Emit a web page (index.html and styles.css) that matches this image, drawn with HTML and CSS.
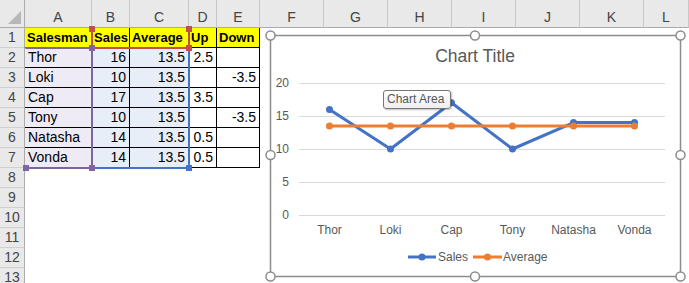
FILE: index.html
```html
<!DOCTYPE html>
<html lang="en">
<head>
  <meta charset="UTF-8">
  <title>Sales vs Average</title>
  <link rel="stylesheet" href="styles.css">
</head>
<body>
<div class="sheet">

  <div class="row head">
    <div class="corner"><span class="tri"></span></div>
    <div class="colh">A</div><div class="colh">B</div><div class="colh">C</div>
    <div class="colh">D</div><div class="colh">E</div><div class="colh">F</div>
    <div class="colh">G</div><div class="colh">H</div><div class="colh">I</div>
    <div class="colh">J</div><div class="colh">K</div><div class="colh">L</div>
  </div>

  <div class="row">
    <div class="rowh">1</div>
    <div class="c hd">Salesman</div><div class="c hd">Sales</div><div class="c hd">Average</div>
    <div class="c hd">Up</div><div class="c hd">Down</div>
    <div class="rest"></div>
  </div>
  <div class="row">
    <div class="rowh">2</div>
    <div class="c cat">Thor</div><div class="c val num">16</div><div class="c val num">13.5</div>
    <div class="c num">2.5</div><div class="c num"></div>
    <div class="rest"></div>
  </div>
  <div class="row">
    <div class="rowh">3</div>
    <div class="c cat">Loki</div><div class="c val num">10</div><div class="c val num">13.5</div>
    <div class="c num"></div><div class="c num">-3.5</div>
    <div class="rest"></div>
  </div>
  <div class="row">
    <div class="rowh">4</div>
    <div class="c cat">Cap</div><div class="c val num">17</div><div class="c val num">13.5</div>
    <div class="c num">3.5</div><div class="c num"></div>
    <div class="rest"></div>
  </div>
  <div class="row">
    <div class="rowh">5</div>
    <div class="c cat">Tony</div><div class="c val num">10</div><div class="c val num">13.5</div>
    <div class="c num"></div><div class="c num">-3.5</div>
    <div class="rest"></div>
  </div>
  <div class="row">
    <div class="rowh">6</div>
    <div class="c cat">Natasha</div><div class="c val num">14</div><div class="c val num">13.5</div>
    <div class="c num">0.5</div><div class="c num"></div>
    <div class="rest"></div>
  </div>
  <div class="row">
    <div class="rowh">7</div>
    <div class="c cat">Vonda</div><div class="c val num">14</div><div class="c val num">13.5</div>
    <div class="c num">0.5</div><div class="c num"></div>
    <div class="rest"></div>
  </div>
  <div class="row"><div class="rowh">8</div><div class="blank"></div></div>
  <div class="row"><div class="rowh">9</div><div class="blank"></div></div>
  <div class="row"><div class="rowh">10</div><div class="blank"></div></div>
  <div class="row"><div class="rowh">11</div><div class="blank"></div></div>
  <div class="row"><div class="rowh">12</div><div class="blank"></div></div>
  <div class="row"><div class="rowh">13</div><div class="blank"></div></div>

  <!-- range highlights for the chart source -->
  <div class="rng rng-blue"></div>
  <div class="rng rng-red"></div>
  <div class="rng rng-purple"></div>
  <span class="hdl h-purple" style="left:89px;top:45px"></span>
  <span class="hdl h-purple" style="left:89px;top:165px"></span>
  <span class="hdl h-purple" style="left:23px;top:165px"></span>
  <span class="hdl h-red" style="left:186px;top:45px"></span>
  <span class="hdl h-red" style="left:89px;top:26px"></span>
  <span class="hdl h-red" style="left:186px;top:26px"></span>
  <span class="hdl h-blue" style="left:186px;top:165px"></span>

  <svg class="chart" width="689" height="283" viewBox="0 0 689 283">
    <rect x="270.5" y="35.5" width="410" height="241" fill="#fff" stroke="#8c8c8c" stroke-width="1.5"/>
    <text class="title" x="475" y="62" text-anchor="middle">Chart Title</text>

    <g stroke="#d9d9d9" stroke-width="1">
      <line x1="299" y1="83.5" x2="665" y2="83.5"/>
      <line x1="299" y1="116.5" x2="665" y2="116.5"/>
      <line x1="299" y1="149.5" x2="665" y2="149.5"/>
      <line x1="299" y1="182.5" x2="665" y2="182.5"/>
      <line x1="299" y1="215.5" x2="665" y2="215.5"/>
    </g>
    <g class="axis" text-anchor="end">
      <text x="289" y="87">20</text>
      <text x="289" y="120">15</text>
      <text x="289" y="153">10</text>
      <text x="289" y="186">5</text>
      <text x="289" y="219">0</text>
    </g>
    <g class="axis" text-anchor="middle">
      <text x="329.5" y="234">Thor</text>
      <text x="390.5" y="234">Loki</text>
      <text x="451.5" y="234">Cap</text>
      <text x="512.5" y="234">Tony</text>
      <text x="573.5" y="234">Natasha</text>
      <text x="634.5" y="234">Vonda</text>
    </g>

    <g fill="#4472c4">
      <polyline points="329.5,109.4 390.5,149 451.5,102.8 512.5,149 573.5,122.6 634.5,122.6" fill="none" stroke="#4472c4" stroke-width="3" stroke-linejoin="round"/>
      <circle cx="329.5" cy="109.4" r="3.5"/>
      <circle cx="390.5" cy="149" r="3.5"/>
      <circle cx="451.5" cy="102.8" r="3.5"/>
      <circle cx="512.5" cy="149" r="3.5"/>
      <circle cx="573.5" cy="122.6" r="3.5"/>
      <circle cx="634.5" cy="122.6" r="3.5"/>
    </g>
    <g fill="#ed7d31">
      <polyline points="329.5,126 390.5,126 451.5,126 512.5,126 573.5,126 634.5,126" fill="none" stroke="#ed7d31" stroke-width="3"/>
      <circle cx="329.5" cy="126" r="3.5"/>
      <circle cx="390.5" cy="126" r="3.5"/>
      <circle cx="451.5" cy="126" r="3.5"/>
      <circle cx="512.5" cy="126" r="3.5"/>
      <circle cx="573.5" cy="126" r="3.5"/>
      <circle cx="634.5" cy="126" r="3.5"/>
    </g>

    <g class="axis">
      <line x1="408" y1="257" x2="436" y2="257" stroke="#4472c4" stroke-width="3"/>
      <circle cx="422" cy="257" r="3.5" fill="#4472c4"/>
      <text x="438" y="261">Sales</text>
      <line x1="473" y1="257" x2="502" y2="257" stroke="#ed7d31" stroke-width="3"/>
      <circle cx="487.5" cy="257" r="3.5" fill="#ed7d31"/>
      <text x="503" y="261">Average</text>
    </g>

    <g fill="#fff" stroke="#8c8c8c" stroke-width="1.5">
      <circle cx="270.5" cy="35.5" r="4.5"/>
      <circle cx="475" cy="35.5" r="4.5"/>
      <circle cx="680.5" cy="35.5" r="4.5"/>
      <circle cx="270.5" cy="155" r="4.5"/>
      <circle cx="680.5" cy="155" r="4.5"/>
      <circle cx="270.5" cy="276.5" r="4.5"/>
      <circle cx="475" cy="276.5" r="4.5"/>
      <circle cx="680.5" cy="276.5" r="4.5"/>
    </g>
  </svg>

  <div class="tip">Chart Area</div>
</div>
</body>
</html>
```

FILE: styles.css
```css
body {
  margin: 0;
  background: #fff;
  font-family: 'Liberation Sans', Arial, sans-serif;
  font-size: 14px;
  color: #000;
}

.sheet { position: relative; width: 689px; height: 283px; overflow: hidden; }

.row {
  display: grid;
  grid-template-columns: 25px 67px 38px 59px 28px 43px repeat(6, 64px) 45px;
  height: 20px;
}
.row > div { box-sizing: border-box; }
.row.head { height: 28px; }

.corner { background: #e9e9e9; border-right: 1px solid #ababab; border-bottom: 1px solid #ababab; position: relative; }
.tri {
  position: absolute; right: 3px; bottom: 3px;
  width: 0; height: 0;
  border-left: 13px solid transparent;
  border-bottom: 13px solid #b8b8b8;
}
.colh {
  background: #e9e9e9;
  border-right: 1px solid #c8c8c8;
  border-bottom: 1px solid #ababab;
  text-align: center;
  color: #444;
  padding-top: 8px;
  line-height: 19px;
}

.rowh {
  background: #e9e9e9;
  border-right: 1px solid #ababab;
  border-bottom: 1px solid #d0d0d0;
  text-align: center;
  color: #444;
  line-height: 19px;
}

.c {
  border-right: 1px solid #000;
  border-bottom: 1px solid #000;
  line-height: 19px;
  padding: 0 3px;
  white-space: nowrap;
  overflow: hidden;
}
.c.hd { background: #ffff00; font-weight: bold; font-size: 13px; padding: 0 2px; }
.c.num { text-align: right; }
.c.cat { background: #efebf5; }
.c.val { background: #e8eef8; }
.rest, .blank { grid-column: 7 / -1; }
.blank { grid-column: 2 / -1; }

.rng { position: absolute; box-sizing: border-box; border: 2px solid; }
.rng-blue { left: 91px; top: 47px; width: 99px; height: 122px; border-color: #4472c4; }
.rng-red { left: 91px; top: 27px; width: 99px; height: 22px; border-color: #c0504d; border-top-color: transparent; }
.rng-purple { left: 24px; top: 47px; width: 69px; height: 122px; border-color: #8064a2; border-left-color: transparent; }

.hdl { position: absolute; width: 6px; height: 6px; }
.h-purple { background: #8064a2; }
.h-red { background: #c0504d; }
.h-blue { background: #4472c4; }

.chart { position: absolute; left: 0; top: 0; font-family: 'Liberation Sans', Arial, sans-serif; }
.chart .title { font-size: 17.5px; fill: #595959; }
.chart .axis { font-size: 12px; fill: #595959; }

.tip {
  position: absolute;
  left: 383px; top: 90px;
  width: 68px; height: 19px;
  box-sizing: border-box;
  border: 1px solid #767676;
  border-radius: 3px;
  background: linear-gradient(#ffffff, #eeeeee);
  box-shadow: 1px 1px 2px rgba(0, 0, 0, 0.25);
  font-size: 12px;
  line-height: 17px;
  color: #575757;
  padding-left: 3px;
  white-space: nowrap;
}
```
